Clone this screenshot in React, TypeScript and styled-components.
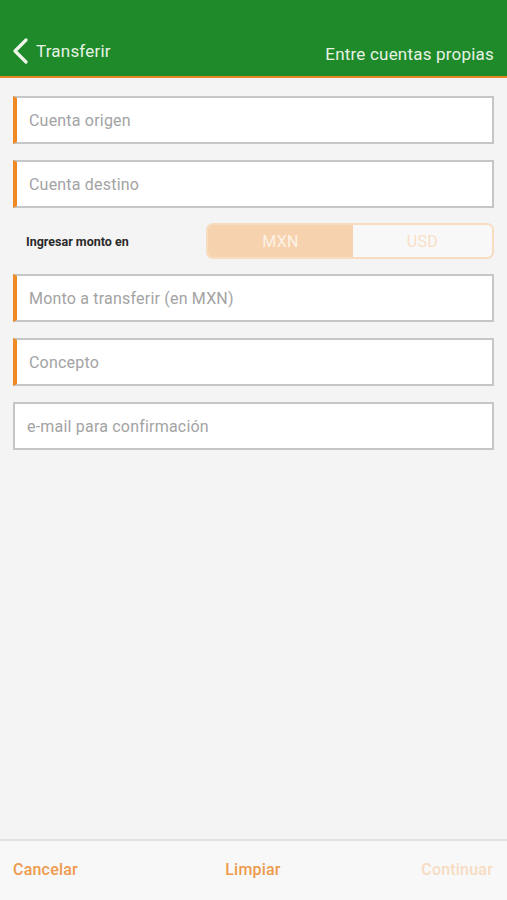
import React from "react";
import styled, { createGlobalStyle } from "styled-components";

const Global = createGlobalStyle`
  html, body { margin: 0; padding: 0; background: #f4f4f4; }
  body { font-family: Roboto, "Open Sans", sans-serif; }
  * { box-sizing: border-box; }
`;

const Page = styled.div`
  width: 507px;
  height: 900px;
  display: flex;
  flex-direction: column;
  background: #f4f4f4;
`;

const Header = styled.header`
  height: 78px;
  background: #1f8a2a;
  border-bottom: 2px solid #e8861f;
  display: flex;
  align-items: flex-end;
  justify-content: space-between;
  padding: 0 13px 12px 12px;
  color: #e6f2e4;
`;

const Back = styled.div`
  display: flex;
  align-items: center;
  gap: 6px;
  font-size: 17px;
  letter-spacing: 0.2px;
`;

const HeaderTitle = styled.div`
  font-size: 17px;
  letter-spacing: 0.2px;
`;

const Form = styled.main`
  flex: 1;
  display: flex;
  flex-direction: column;
  gap: 16px;
  padding: 18px 13px 0 13px;
`;

const Field = styled.div<{ $required?: boolean }>`
  height: 48px;
  background: #fff;
  border: 2px solid #c6c6c6;
  border-left: ${(p) => (p.$required ? "4px solid #f08a24" : "2px solid #c6c6c6")};
  display: flex;
  align-items: center;
  padding-left: ${(p) => (p.$required ? "12px" : "12px")};
  color: #a3a3a3;
  font-size: 16px;
  letter-spacing: 0.2px;
`;

const ToggleRow = styled.div`
  display: flex;
  align-items: center;
  height: 36px;
  margin: -1px 0;
`;

const ToggleLabel = styled.div`
  width: 193px;
  padding-left: 13px;
  font-size: 12.5px;
  font-weight: 700;
  color: #2a2a2a;
`;

const Toggle = styled.div`
  flex: 1;
  height: 36px;
  display: grid;
  grid-template-columns: 145px 1fr;
  border: 2px solid #f7dcc0;
  border-radius: 7px;
  overflow: hidden;
`;

const ToggleOption = styled.div<{ $active?: boolean }>`
  display: flex;
  align-items: center;
  justify-content: center;
  background: ${(p) => (p.$active ? "#f6d2ae" : "#f8f8f8")};
  color: ${(p) => (p.$active ? "#fdf2e6" : "#f8dfc6")};
  font-size: 16px;
  letter-spacing: 0.3px;
`;

const Footer = styled.footer`
  height: 61px;
  border-top: 2px solid #e2e2e2;
  background: #f8f8f8;
  display: flex;
  align-items: center;
  justify-content: space-between;
  padding: 0 14px 2px 13px;
`;

const FooterButton = styled.div<{ $disabled?: boolean }>`
  width: 120px;
  font-size: 16px;
  letter-spacing: 0.2px;
  color: ${(p) => (p.$disabled ? "#f7dcc2" : "#ee9a4c")};
  font-weight: 500;
  &:nth-child(2) { text-align: center; }
  &:nth-child(3) { text-align: right; }
`;

export default function App() {
  return (
    <Page>
      <Global />
      <Header>
        <Back>
          <svg width="18" height="26" viewBox="0 0 18 26">
            <path d="M14 2 L3 13 L14 24" fill="none" stroke="#eef6ec" strokeWidth="3.2" strokeLinecap="round" strokeLinejoin="round" />
          </svg>
          <span>Transferir</span>
        </Back>
        <HeaderTitle>Entre cuentas propias</HeaderTitle>
      </Header>
      <Form>
        <Field $required>Cuenta origen</Field>
        <Field $required>Cuenta destino</Field>
        <ToggleRow>
          <ToggleLabel>Ingresar monto en</ToggleLabel>
          <Toggle>
            <ToggleOption $active>MXN</ToggleOption>
            <ToggleOption>USD</ToggleOption>
          </Toggle>
        </ToggleRow>
        <Field $required>Monto a transferir (en MXN)</Field>
        <Field $required>Concepto</Field>
        <Field>e-mail para confirmación</Field>
      </Form>
      <Footer>
        <FooterButton>Cancelar</FooterButton>
        <FooterButton>Limpiar</FooterButton>
        <FooterButton $disabled>Continuar</FooterButton>
      </Footer>
    </Page>
  );
}
